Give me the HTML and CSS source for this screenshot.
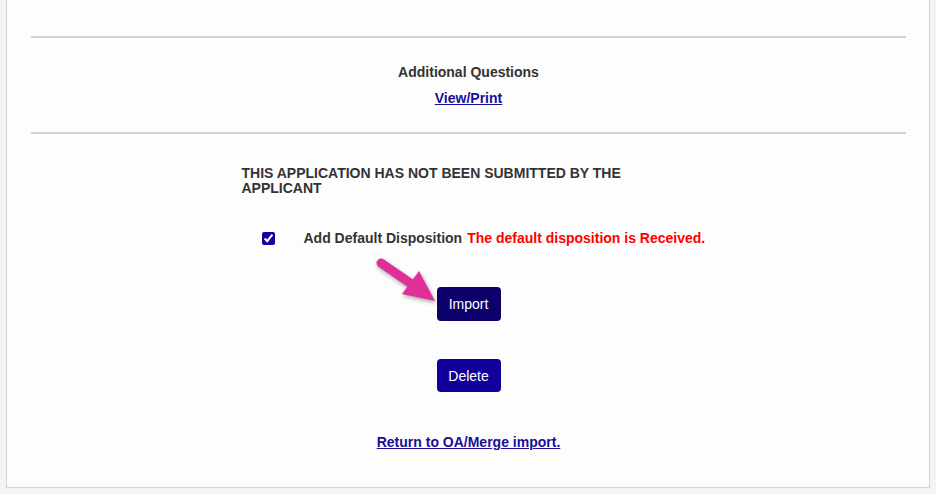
FILE: index.html
```html
<!DOCTYPE html>
<html>
<head>
<meta charset="utf-8">
<link rel="stylesheet" href="styles.css">
</head>
<body>
<div class="panel">
  <hr class="rule">
  <div class="section">
    <div class="label">Additional Questions</div>
    <a class="link" href="#">View/Print</a>
  </div>
  <hr class="rule">
  <div class="applicant">
    <div class="notice">THIS APPLICATION HAS NOT BEEN SUBMITTED BY THE APPLICANT</div>
    <div class="dispo">
      <input type="checkbox" class="check" checked>
      <span class="label">Add Default Disposition</span>
      <span class="warn">The default disposition is Received.</span>
    </div>
  </div>
  <div class="actions">
    <div class="btn-wrap">
      <svg class="pointer" width="64" height="48" viewBox="0 0 64 48">
        <line x1="6" y1="6" x2="38" y2="28" stroke="#e02f98" stroke-width="9" stroke-linecap="round"/>
        <polygon points="44,14 27,37 60,44" fill="#e02f98"/>
      </svg>
      <button class="btn btn-dark">Import</button>
    </div>
    <button class="btn">Delete</button>
    <a class="link" href="#">Return to OA/Merge import.</a>
  </div>
</div>
</body>
</html>
```
FILE: styles.css
```css
html, body {
  margin: 0;
  padding: 0;
}
body {
  background: #f4f4f4;
  font-family: "Liberation Sans", Arial, sans-serif;
  font-size: 14px;
  color: #333333;
}
.panel {
  margin: 0 6px 6px 6px;
  height: 488px;
  box-sizing: border-box;
  background: #fdfdfd;
  border: 1px solid #d4d4d4;
  border-top: none;
  padding: 36px 23px 0 24px;
}
.rule {
  margin: 0;
  border: none;
  height: 2px;
  background: #d3d3d3;
}
.section {
  display: flex;
  flex-direction: column;
  align-items: center;
  gap: 10px;
  padding: 26px 0 26px 0;
}
.label {
  font-weight: bold;
  line-height: 16px;
  color: #333333;
}
.link {
  font-weight: bold;
  line-height: 16px;
  color: #1a0f96;
  text-decoration: underline;
}
.applicant {
  width: 454px;
  margin: 0 auto;
  padding-top: 32px;
}
.notice {
  font-weight: bold;
  line-height: 15px;
}
.dispo {
  display: flex;
  align-items: center;
  white-space: nowrap;
  padding-left: 20px;
  margin-top: 34px;
  height: 16px;
}
.check {
  margin: 0 29px 0 0;
  width: 13px;
  height: 13px;
  accent-color: #14009a;
}
.warn {
  font-weight: bold;
  color: #ff0000;
  margin-left: 5px;
}
.actions {
  display: flex;
  flex-direction: column;
  align-items: center;
}
.btn-wrap {
  position: relative;
  margin-top: 41px;
}
.pointer {
  position: absolute;
  left: -62px;
  top: -30px;
  filter: drop-shadow(1px 2px 2px rgba(0, 0, 0, 0.35));
}
.btn {
  width: 64px;
  height: 34px;
  border: none;
  border-radius: 4px;
  background: #12009b;
  color: #ffffff;
  font-family: "Liberation Sans", Arial, sans-serif;
  font-size: 14px;
  padding: 0;
  display: block;
}
.btn-dark {
  background: #0c006b;
}
.actions > .btn {
  margin-top: 38px;
  height: 33px;
}
.actions > .link {
  margin-top: 42px;
}
```
